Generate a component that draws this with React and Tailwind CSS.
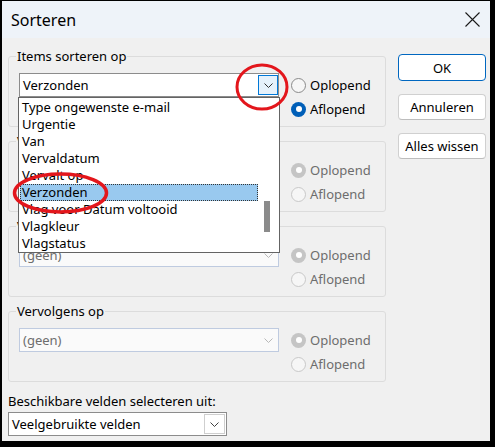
import React from "react";

const Chevron = ({ color = "#404040" }) => (
  <svg width="9" height="5" viewBox="0 0 9 5">
    <path d="M0.5 0.5 L4.5 4.5 L8.5 0.5" fill="none" stroke={color} strokeWidth="1" />
  </svg>
);

function Radio({ checked, disabled, label }) {
  let circle;
  if (!disabled) {
    circle = checked ? (
      <span className="w-[15px] h-[15px] rounded-full bg-[#005fb8] flex items-center justify-center">
        <span className="w-[6px] h-[6px] rounded-full bg-white" />
      </span>
    ) : (
      <span className="w-[15px] h-[15px] rounded-full border border-[#8a8a8a] bg-[#f6f6f6]" />
    );
  } else {
    circle = checked ? (
      <span className="w-[15px] h-[15px] rounded-full bg-[#c5c5c5] flex items-center justify-center">
        <span className="w-[6px] h-[6px] rounded-full bg-white" />
      </span>
    ) : (
      <span className="w-[15px] h-[15px] rounded-full border border-[#c8c8c8] bg-[#f6f6f6]" />
    );
  }
  return (
    <div className="flex items-center h-[24px] gap-[4px]">
      {circle}
      <span className={`text-[13px] leading-[16px] ${disabled ? "text-[#6d6d6d]" : "text-black"}`}>{label}</span>
    </div>
  );
}

function Combo({ value, disabled, active }) {
  return (
    <div
      className={`w-[260px] h-[24px] border flex items-center justify-between ${
        disabled ? "border-[#bfcbe0] bg-[#fafafa] text-[#6d6d6d]" : "border-[#8c8c8c] bg-white text-black"
      }`}
    >
      <span className="pl-[3px] text-[13px] leading-[16px]">{value}</span>
      {active ? (
        <span className="w-[20px] h-[20px] border border-[#0078d7] bg-[#e5f1fb] flex items-center justify-center">
          <Chevron color="#303030" />
        </span>
      ) : (
        <span className="w-[20px] h-[20px] flex items-center justify-center">
          <Chevron color={disabled ? "#b8b8b8" : "#404040"} />
        </span>
      )}
    </div>
  );
}

function Group({ label, value, disabled, active, asc }) {
  return (
    <div className="relative h-[71px] border border-[#dcdcdc] rounded-[3px] flex pl-[10px] pt-[16px]">
      <span className="absolute left-[7px] top-[-9px] px-[1px] bg-[#f0f0f0] text-[13px] leading-[16px] text-black">
        {label}
      </span>
      <Combo value={value} disabled={disabled} active={active} />
      <div className="ml-[12px] flex flex-col">
        <Radio checked={asc} disabled={disabled} label="Oplopend" />
        <Radio checked={!asc} disabled={disabled} label="Aflopend" />
      </div>
    </div>
  );
}

const items = [
  "Type ongewenste e-mail",
  "Urgentie",
  "Van",
  "Vervaldatum",
  "Vervalt op",
  "Verzonden",
  "Vlag voor Datum voltooid",
  "Vlagkleur",
  "Vlagstatus",
];

export default function App() {
  return (
    <div className="w-[495px] h-[447px] bg-black pl-[2px] pt-[1px] font-['Noto_Sans',sans-serif] text-black">
      <div className="relative w-[488px] h-[440px] bg-[#f0f0f0] flex flex-col overflow-hidden">
        {/* Title bar */}
        <div className="h-[37px] bg-[#eef3f9] flex items-center justify-between pl-[9px] pr-[10px]">
          <span className="text-[16px] leading-[20px]">Sorteren</span>
          <svg width="15" height="15" viewBox="0 0 15 15">
            <path d="M0.5 0.5 L14.5 14.5 M14.5 0.5 L0.5 14.5" stroke="#1a1a1a" strokeWidth="1.1" fill="none" />
          </svg>
        </div>

        {/* Body */}
        <div className="flex pl-[6px]">
          <div className="w-[378px] pt-[18px] flex flex-col gap-[14px]">
            <Group label="Items sorteren op" value="Verzonden" active asc={false} />
            <Group label="Vervolgens op" value="(geen)" disabled asc />
            <Group label="Vervolgens op" value="(geen)" disabled asc />
            <Group label="Vervolgens op" value="(geen)" disabled asc />
          </div>
          <div className="ml-[12px] pt-[16px] flex flex-col gap-[13px]">
            <button className="w-[88px] h-[27px] rounded-[4px] bg-white border border-[#0067c0] text-[13px] leading-[16px]">
              OK
            </button>
            <button className="w-[88px] h-[26px] rounded-[4px] bg-white border border-[#d0d0d0] border-b-[#bdbdbd] text-[13px] leading-[16px]">
              Annuleren
            </button>
            <button className="w-[88px] h-[26px] rounded-[4px] bg-white border border-[#d0d0d0] border-b-[#bdbdbd] text-[13px] leading-[16px]">
              Alles wissen
            </button>
          </div>
        </div>

        {/* Bottom */}
        <div className="pl-[6px] mt-[11px]">
          <div className="text-[13px] leading-[16px]">Beschikbare velden selecteren uit:</div>
          <div className="mt-[3px] w-[219px] h-[24px] bg-white border border-[#8c8c8c] flex items-center justify-between">
            <span className="pl-[3px] text-[13px] leading-[16px]">Veelgebruikte velden</span>
            <span className="w-[21px] h-[20px] mr-[1px] border border-[#cfcfcf] bg-white flex items-center justify-center">
              <Chevron color="#404040" />
            </span>
          </div>
        </div>

        {/* Open dropdown list */}
        <div className="absolute left-[16px] top-[96px] w-[262px] h-[156px] bg-white border border-[#646464] flex">
          <div className="flex flex-col pt-[1px] pl-[1px] w-[239px]">
            {items.map((it) => (
              <div
                key={it}
                className={`h-[17px] pl-[2px] text-[13px] leading-[17px] whitespace-nowrap ${
                  it === "Verzonden" ? "bg-[#99c9ef] outline outline-1 outline-dotted outline-[#333] -outline-offset-1" : ""
                }`}
              >
                {it}
              </div>
            ))}
          </div>
          <div className="flex-1 relative">
            <div className="absolute left-[6px] top-[103px] w-[6px] h-[31px] bg-[#8b8b8b]" />
          </div>
        </div>

        {/* Red annotation ellipses */}
        <svg className="absolute left-0 top-0 pointer-events-none" width="488" height="440">
          <ellipse cx="260" cy="86" rx="25" ry="22" fill="none" stroke="#e3161c" strokeWidth="3" />
          <ellipse cx="58.5" cy="192" rx="46" ry="19" fill="none" stroke="#e3161c" strokeWidth="3.5" />
        </svg>
      </div>
    </div>
  );
}
